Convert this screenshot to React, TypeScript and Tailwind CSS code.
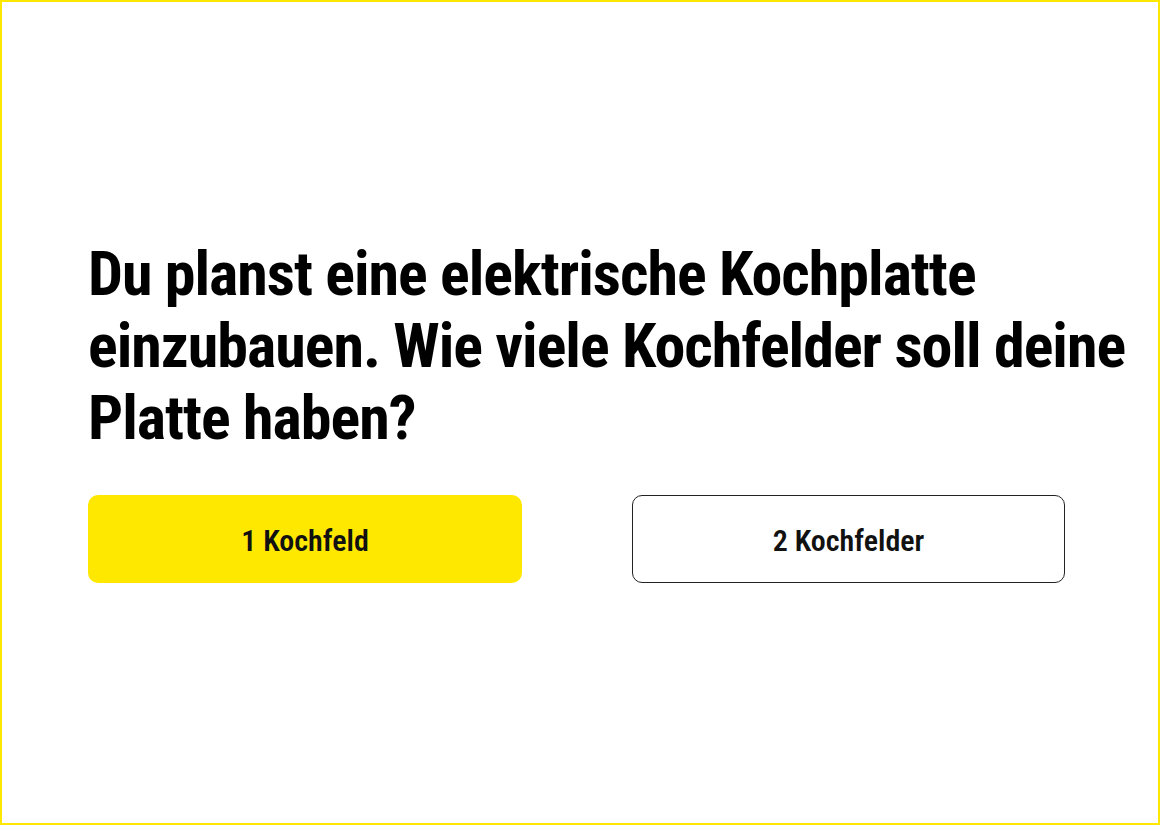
export default function App() {
  return (
    <div className="h-[825px] w-[1160px] border-2 border-[#ffe800] bg-white">
      <div className="pl-[86px] pt-[236px] [font-family:Roboto,'Liberation_Sans',sans-serif] font-stretch-condensed">
        <h1 className="w-[1060px] text-[62px] leading-[72px] font-bold tracking-[-1px] text-black">
          Du planst eine elektrische Kochplatte einzubauen. Wie viele Kochfelder soll deine Platte haben?
        </h1>
        <div className="mt-[41px] flex w-[978px] gap-[110px]">
          <button className="h-[88px] w-[434px] rounded-[10px] bg-[#ffe800] pt-[2px] text-[30px] font-semibold text-[#111]">
            1 Kochfeld
          </button>
          <button className="h-[88px] w-[433px] rounded-[10px] border-[1.5px] border-[#222] bg-white pt-[2px] text-[30px] font-semibold text-[#111]">
            2 Kochfelder
          </button>
        </div>
      </div>
    </div>
  );
}
